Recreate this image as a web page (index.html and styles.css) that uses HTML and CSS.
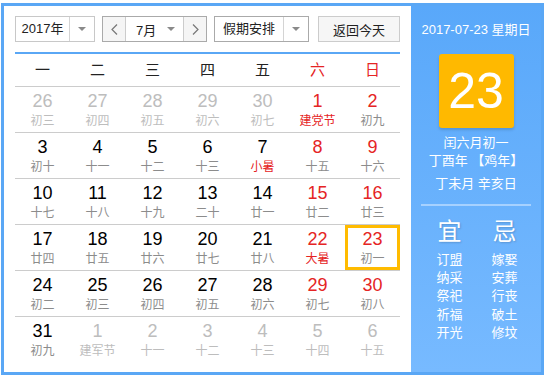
FILE: index.html
```html
<!DOCTYPE html>
<html lang="zh-CN">
<head>
    <meta charset="UTF-8">
    <meta name="viewport" content="width=device-width, initial-scale=1.0">
    <title>万年历</title>
    <link rel="stylesheet" href="styles.css">
</head>
<body>
    <div class="cal">
        <!-- 左边：日历 -->
        <div class="main">
            <div class="toolbar">
                <div class="select year">
                    <span class="sel-text">2017年</span>
                    <span class="sel-arrow"><i class="caret"></i></span>
                </div>
                <div class="month-group">
                    <span class="nav-btn prev"><svg width="7" height="11" viewBox="0 0 7 11"><polyline points="6,0.5 1,5.5 6,10.5" fill="none" stroke="#777" stroke-width="1.2"/></svg></span>
                    <div class="month-sel"><span>7月</span><i class="caret"></i></div>
                    <span class="nav-btn next"><svg width="7" height="11" viewBox="0 0 7 11"><polyline points="1,0.5 6,5.5 1,10.5" fill="none" stroke="#777" stroke-width="1.2"/></svg></span>
                </div>
                <div class="select holiday">
                    <span class="sel-text">假期安排</span>
                    <span class="sel-arrow"><i class="caret"></i></span>
                </div>
                <button type="button" class="today-btn">返回今天</button>
            </div>

            <div class="week-head">
                <span>一</span><span>二</span><span>三</span><span>四</span><span>五</span>
                <span class="red">六</span><span class="red">日</span>
            </div>

            <div class="days">
                <div class="row">
                    <div class="day other"><b>26</b><em>初三</em></div>
                    <div class="day other"><b>27</b><em>初四</em></div>
                    <div class="day other"><b>28</b><em>初五</em></div>
                    <div class="day other"><b>29</b><em>初六</em></div>
                    <div class="day other"><b>30</b><em>初七</em></div>
                    <div class="day weekend"><b>1</b><em class="fest">建党节</em></div>
                    <div class="day weekend"><b>2</b><em>初九</em></div>
                </div>
                <div class="row">
                    <div class="day"><b>3</b><em>初十</em></div>
                    <div class="day"><b>4</b><em>十一</em></div>
                    <div class="day"><b>5</b><em>十二</em></div>
                    <div class="day"><b>6</b><em>十三</em></div>
                    <div class="day"><b>7</b><em class="fest">小暑</em></div>
                    <div class="day weekend"><b>8</b><em>十五</em></div>
                    <div class="day weekend"><b>9</b><em>十六</em></div>
                </div>
                <div class="row">
                    <div class="day"><b>10</b><em>十七</em></div>
                    <div class="day"><b>11</b><em>十八</em></div>
                    <div class="day"><b>12</b><em>十九</em></div>
                    <div class="day"><b>13</b><em>二十</em></div>
                    <div class="day"><b>14</b><em>廿一</em></div>
                    <div class="day weekend"><b>15</b><em>廿二</em></div>
                    <div class="day weekend"><b>16</b><em>廿三</em></div>
                </div>
                <div class="row">
                    <div class="day"><b>17</b><em>廿四</em></div>
                    <div class="day"><b>18</b><em>廿五</em></div>
                    <div class="day"><b>19</b><em>廿六</em></div>
                    <div class="day"><b>20</b><em>廿七</em></div>
                    <div class="day"><b>21</b><em>廿八</em></div>
                    <div class="day weekend"><b>22</b><em class="fest">大暑</em></div>
                    <div class="day weekend today"><b>23</b><em>初一</em></div>
                </div>
                <div class="row">
                    <div class="day"><b>24</b><em>初二</em></div>
                    <div class="day"><b>25</b><em>初三</em></div>
                    <div class="day"><b>26</b><em>初四</em></div>
                    <div class="day"><b>27</b><em>初五</em></div>
                    <div class="day"><b>28</b><em>初六</em></div>
                    <div class="day weekend"><b>29</b><em>初七</em></div>
                    <div class="day weekend"><b>30</b><em>初八</em></div>
                </div>
                <div class="row">
                    <div class="day"><b>31</b><em>初九</em></div>
                    <div class="day other"><b>1</b><em>建军节</em></div>
                    <div class="day other"><b>2</b><em>十一</em></div>
                    <div class="day other"><b>3</b><em>十二</em></div>
                    <div class="day other"><b>4</b><em>十三</em></div>
                    <div class="day other"><b>5</b><em>十四</em></div>
                    <div class="day other"><b>6</b><em>十五</em></div>
                </div>
            </div>
        </div>

        <!-- 右边：当天详情 -->
        <div class="side">
            <div class="side-date">2017-07-23 星期日</div>
            <div class="big-day">23</div>
            <div class="lunar">闰六月初一</div>
            <div class="lunar">丁酉年 【鸡年】</div>
            <div class="lunar ganzhi">丁未月 辛亥日</div>
            <div class="divider"></div>
            <div class="yiji">
                <div class="yiji-col">
                    <div class="yiji-title">宜</div>
                    <div>订盟</div><div>纳采</div><div>祭祀</div><div>祈福</div><div>开光</div>
                </div>
                <div class="yiji-col">
                    <div class="yiji-title">忌</div>
                    <div>嫁娶</div><div>安葬</div><div>行丧</div><div>破土</div><div>修坟</div>
                </div>
            </div>
        </div>
    </div>
</body>
</html>
```

FILE: styles.css
```css
body {
    margin: 0;
    font-family: "Liberation Sans", "Noto Sans CJK SC", sans-serif;
    color: #333;
}
.cal {
    display: flex;
    width: 537px;
    height: 366px;
    margin: 3px 0 0 1px;
    border: 3px solid #5aa7f5;
}
.main {
    width: 407px;
    padding: 10px 11px 0;
    box-sizing: border-box;
    background: #fff;
}
.toolbar {
    display: flex;
    height: 26px;
    font-size: 13px;
}
.select {
    display: flex;
    box-sizing: border-box;
    border: 1px solid #c8c8c8;
    background: #fff;
}
.select.year {
    width: 80px;
}
.select.holiday {
    width: 95px;
    margin-left: 7px;
    border-color: #aaa;
}
.sel-text {
    flex: 1;
    text-align: center;
    line-height: 24px;
    color: #222;
}
.sel-arrow {
    width: 24px;
    border-left: 1px solid #d4d4d4;
    display: flex;
    align-items: center;
    justify-content: center;
}
.caret {
    display: inline-block;
    width: 0;
    height: 0;
    border-left: 4px solid transparent;
    border-right: 4px solid transparent;
    border-top: 4px solid #8a8a8a;
}
.month-group {
    display: flex;
    width: 105px;
    margin-left: 7px;
    box-sizing: border-box;
    border: 1px solid #aaa;
}
.nav-btn {
    width: 22px;
    background: #f5f5f5;
    display: flex;
    align-items: center;
    justify-content: center;
}
.nav-btn.prev {
    border-right: 1px solid #ccc;
}
.nav-btn.next {
    border-left: 1px solid #ccc;
}
.month-sel {
    flex: 1;
    display: flex;
    align-items: center;
    justify-content: space-between;
    padding: 0 8px 0 10px;
    color: #222;
}
.today-btn {
    width: 82px;
    height: 26px;
    margin-left: 9px;
    padding: 0;
    border: 1px solid #ccc;
    background: #f6f6f6;
    font-family: inherit;
    font-size: 13px;
    color: #222;
}
.week-head {
    display: grid;
    grid-template-columns: repeat(7, 55px);
    height: 32px;
    margin-top: 10px;
    border-top: 2px solid #5aa7f5;
    border-bottom: 1px solid #ccc;
    line-height: 32px;
    font-size: 15px;
    text-align: center;
    color: #222;
}
.red {
    color: #e52424;
}
.row {
    display: grid;
    grid-template-columns: repeat(7, 55px);
    height: 45px;
    border-bottom: 1px solid #ccc;
}
.row:last-child {
    border-bottom: none;
}
.day {
    padding-top: 4px;
    text-align: center;
}
.day b {
    display: block;
    font-weight: normal;
    font-size: 18px;
    line-height: 21px;
    color: #000;
}
.day em {
    display: block;
    margin-top: 1px;
    font-style: normal;
    font-size: 12px;
    line-height: 16px;
    color: #8c8c8c;
}
.day.weekend b {
    color: #e52424;
}
.day em.fest {
    color: #e52424;
}
.day.other b {
    color: #bdbdbd;
}
.day.other em {
    color: #bdbdbd;
}
.day.today {
    box-shadow: inset 0 0 0 3px #ffbb00;
}
.side {
    width: 130px;
    background: linear-gradient(#59a8fa, #77baff);
    color: #fff;
    text-align: center;
    font-size: 13px;
}
.side-date {
    margin-top: 15px;
    line-height: 18px;
}
.big-day {
    width: 75px;
    height: 74px;
    margin: 15px auto 0;
    background: #ffb900;
    border-radius: 3px;
    box-shadow: 0 2px 3px rgba(0, 0, 0, 0.15);
    font-size: 50px;
    line-height: 74px;
}
.lunar {
    line-height: 18px;
}
.lunar:first-of-type,
.big-day + .lunar {
    margin-top: 6px;
}
.lunar.ganzhi {
    margin-top: 5px;
}
.divider {
    width: 110px;
    height: 2px;
    margin: 11px auto 0;
    background: #a6d1ff;
}
.yiji {
    display: grid;
    grid-template-columns: 55px 55px;
    justify-content: center;
    padding-left: 2px;
    margin-top: 11px;
    line-height: 18.2px;
}
.yiji-title {
    font-size: 24px;
    line-height: 30px;
    margin-bottom: 4px;
    text-shadow: 1px 1px 2px rgba(0, 0, 0, 0.18);
}
```
